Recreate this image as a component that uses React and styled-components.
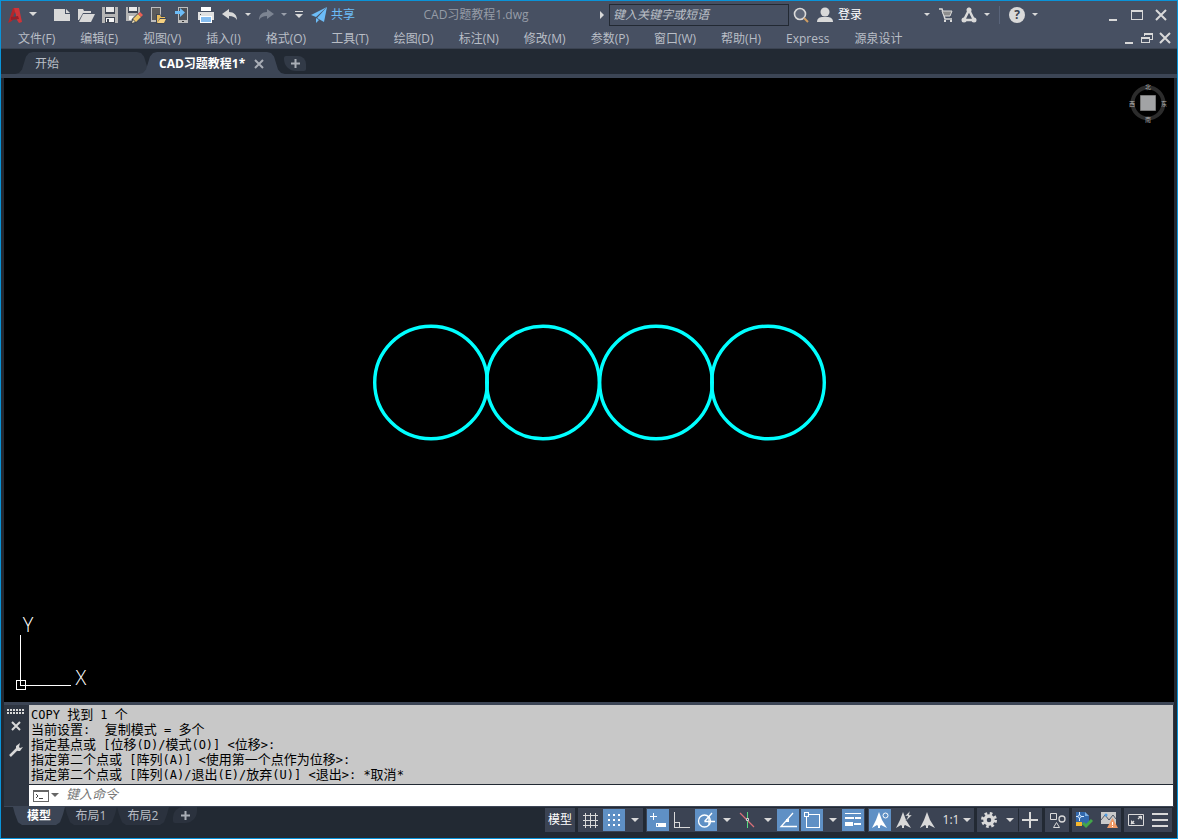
import React from "react";
import styled, { createGlobalStyle, css } from "styled-components";

const COLORS = {
  frame: "#0a93d8",
  chrome: "#475062",
  dark: "#222933",
  edge: "#2b323e",
  tab: "#323a47",
  tabActive: "#3c4555",
  cell: "#3b4353",
  active: "#5f90c5",
  icon: "#d9d9d9",
  text: "#b9bec6",
  blue: "#6cbcf7",
};

const MENUS = [
  "文件(F)",
  "编辑(E)",
  "视图(V)",
  "插入(I)",
  "格式(O)",
  "工具(T)",
  "绘图(D)",
  "标注(N)",
  "修改(M)",
  "参数(P)",
  "窗口(W)",
  "帮助(H)",
  "Express",
  "源泉设计",
];

const HISTORY = [
  "COPY 找到 1 个",
  "当前设置:  复制模式 = 多个",
  "指定基点或 [位移(D)/模式(O)] <位移>:",
  "指定第二个点或 [阵列(A)] <使用第一个点作为位移>:",
  "指定第二个点或 [阵列(A)/退出(E)/放弃(U)] <退出>: *取消*",
];

const CIRCLES = [58, 170, 283, 395];

const Svg = ({ w = 18, h = 18, children, ...rest }) => (
  <svg
    width={w}
    height={h}
    viewBox={`0 0 ${w} ${h}`}
    fill="none"
    stroke={COLORS.icon}
    aria-hidden="true"
    {...rest}
  >
    {children}
  </svg>
);

const Caret = ({ color = COLORS.icon, small }) => (
  <Svg w={8} h={5} stroke="none" fill={color}>
    <path d={small ? "M1 1h6L4 4z" : "M0 0h8L4 4z"} />
  </Svg>
);

/* ---------- title bar icons ---------- */

const LogoIcon = () => (
  <Svg stroke="none">
    <path d="M2 17L7 2h5L6 15z" fill="#b3262b" />
    <path d="M8 2h5l3 14-3 1-2-3-2-8z" fill="#cf3438" />
    <path d="M5 11l7-1 1 3-8 1z" fill="#96202a" />
    <path d="M9 6l1 4-3 1z" fill={COLORS.chrome} />
  </Svg>
);

const NewIcon = () => (
  <Svg stroke="none" fill={COLORS.icon}>
    <path d="M1 3h11v5h5v7H1zM13 3l4 4h-4z" />
  </Svg>
);

const OpenIcon = () => (
  <Svg stroke="none" fill={COLORS.icon}>
    <path d="M1 3h5l1 2h7v2H6l-4 7H1z" />
    <path d="M6 8h12l-4 8H2z" />
  </Svg>
);

const SaveIcon = () => (
  <Svg stroke="none">
    <path d="M1 1h16v16H1z" fill="#b5b5b5" />
    <path d="M4 1h10v7H4z" fill="#3f4654" />
    <path d="M5 1h8v5H5z" fill="#e8e8e8" />
    <path d="M4 11h10v6H4z" fill="#3f4654" />
    <path d="M5 12h8v4H5z" fill="#f4f4f4" />
    <path d="M6 13h2v3H6z" fill="#3f4654" />
  </Svg>
);

const SaveAsIcon = () => (
  <Svg stroke="none">
    <path d="M1 1h14v5l-8 9H1z" fill="#b5b5b5" />
    <path d="M3 1h10v6H3z" fill="#3f4654" />
    <path d="M4 1h8v4H4z" fill="#e8e8e8" />
    <path d="M4 10h5l-3 4H4z" fill="#f4f4f4" />
    <path d="M7 13l6-6 4 4-6 6-5 1z" fill="#3f4654" />
    <path d="M8 13l5-5 3 3-5 5z" fill="#f0c76a" />
    <path d="M13 8l2-2 3 3-2 2z" fill="#ec5f55" />
    <path d="M8 14l2 2-3 1z" fill="#f6e3b5" />
  </Svg>
);

const WebOpenIcon = () => (
  <Svg stroke="none">
    <path d="M2 1h10v15H2z" fill="#bdbdbd" />
    <path d="M3 2h8v12H3z" fill="#5b5b5b" />
    <path d="M7 8h4l1 2h4v2h2l-3 6H7z" fill="#3f4654" />
    <path d="M8 9h3l1 2h4v1h-5l-3 5z" fill="#e9bd5c" />
    <path d="M11 13h6l-2 4H8z" fill="#f5d080" />
  </Svg>
);

const MobileIcon = () => (
  <Svg stroke="none">
    <path d="M5 1h10v16H5z" fill="#bdbdbd" />
    <path d="M6 2h8v12H6z" fill="#4d5056" />
    <path d="M9 15h2v1H9z" fill="#333" />
    <path d="M2 5h5V2l5 4.500L7 11V8H2z" fill={COLORS.blue} />
  </Svg>
);

const PrintIcon = () => (
  <Svg stroke="none">
    <path d="M4 1h10v4H4z" fill="#fff" />
    <path d="M1 6h16v8H1z" fill="#e1e1e1" />
    <path d="M3 8h1v1H3z" fill="#555" />
    <path d="M3 10h12v7H3z" fill="#fff" />
    <path d="M4 11h10v5H4z" fill="#85bdf0" />
  </Svg>
);

const UndoIcon = ({ color = COLORS.icon, flip }) => (
  <Svg stroke="none" fill={color}>
    <path
      d="M1 8l7-5v3c5 0 8 3 8 8-2-3-4-4-8-4v3z"
      transform={flip ? "matrix(-1 0 0 1 18 0)" : undefined}
    />
  </Svg>
);

const PlaneIcon = () => (
  <Svg stroke="none" fill={COLORS.blue}>
    <path d="M1 9l16-8L6 11z" />
    <path d="M17 1L7 12l7 4z" />
    <path d="M6 12l3 2-3 3z" />
  </Svg>
);

const SearchIcon = () => (
  <Svg>
    <circle cx="8" cy="8" r="5.500" strokeWidth="1.600" fill="#5d6678" />
    <path d="M12 12l4 4" stroke="#cf9d62" strokeWidth="2" />
  </Svg>
);

const UserIcon = () => (
  <Svg stroke="none" fill={COLORS.icon}>
    <circle cx="9" cy="6" r="4.500" />
    <path d="M1 16c0-4 3-5 6-5h4c3 0 6 1 6 5z" />
  </Svg>
);

const CartIcon = () => (
  <Svg>
    <path d="M3 3h3l3 10h7" strokeWidth="1.500" />
    <path d="M6 5h10l-2 5H8z" fill="#8d8d8d" />
    <path d="M8 14h2v2H8zM14 14h2v2h-2z" fill={COLORS.icon} stroke="none" />
  </Svg>
);

const AppsIcon = () => (
  <Svg>
    <path d="M9 4L4 14h10z" strokeWidth="2.500" />
    <g fill={COLORS.icon} stroke="none">
      <circle cx="9" cy="4" r="2.500" />
      <circle cx="4" cy="14" r="2.500" />
      <circle cx="14" cy="14" r="2.500" />
    </g>
  </Svg>
);

/* ---------- status bar icons ---------- */

const GridIcon = () => (
  <Svg shapeRendering="crispEdges">
    <path d="M4.500 2v15M9.500 2v15M14.500 2v15M2 4.500h15M2 9.500h15M2 14.500h15" />
  </Svg>
);

const SnapIcon = () => (
  <Svg stroke="none" fill="#fff">
    {[3, 8, 13].map((y) =>
      [3, 8, 13].map((x) => (
        <rect key={`${x}-${y}`} x={x} y={y} width="2" height="2" />
      ))
    )}
  </Svg>
);

const DynIcon = () => (
  <Svg stroke="#fff" shapeRendering="crispEdges">
    <path d="M4.500 2v7M1 5.500h7" />
    <path d="M7 12h10v4H7z" fill="#fff" stroke="none" />
    <path d="M8 13h1v2H8z" fill={COLORS.active} stroke="none" />
  </Svg>
);

const OrthoIcon = () => (
  <Svg shapeRendering="crispEdges">
    <path d="M1.500 1v15.500H17M1.500 11.500h5v5" />
  </Svg>
);

const PolarIcon = () => (
  <Svg stroke="#fff">
    <circle cx="7.500" cy="10" r="6" strokeWidth="1.300" />
    <path d="M7.500 10.500H18M7.500 10.500L15 2M12 6v8" strokeWidth="1.300" />
  </Svg>
);

const IsoIcon = () => (
  <Svg>
    <path d="M2 2l14 14" stroke="#d87078" strokeWidth="1.200" />
    <path d="M9.500 1v16" stroke="#57d880" shapeRendering="crispEdges" />
    <path d="M8.500 7.500h2v2h-2z" fill={COLORS.cell} />
  </Svg>
);

const TrackIcon = () => (
  <Svg stroke="#fff">
    <path d="M14 2L2 15.500h16" strokeWidth="1.300" />
    <path d="M7 8h3v3H7z" fill="#fff" stroke="none" />
  </Svg>
);

const OsnapIcon = () => (
  <Svg stroke="#fff" shapeRendering="crispEdges">
    <path d="M3.500 3.500h13v13h-13z" />
    <path d="M1.500 1.500h4v4h-4z" fill={COLORS.active} />
  </Svg>
);

const WeightIcon = () => (
  <Svg stroke="none" fill="#fff">
    <path d="M1 2h16v1H1zM1 6h9v2H1zM11 6h6v2h-6zM1 11h8v4H1zM10 12h7v2h-7z" />
  </Svg>
);

const ScaleMark = ({ color = COLORS.icon, badge }) => (
  <Svg stroke="none" fill={color}>
    <path d="M8 1l3 8 5 8-6-3-1 1v2H7v-2l-1-1-5 3 4-8z" />
    {badge === "ring" && (
      <circle cx="14.500" cy="4.500" r="2.500" fill={COLORS.active} stroke={color} />
    )}
    {badge === "bolt" && (
      <path d="M15 0l-5 5h3l-2 5 6-6h-3z" stroke={COLORS.cell} strokeWidth="0.400" />
    )}
  </Svg>
);

const GearIcon = () => (
  <Svg>
    <circle cx="9" cy="9" r="6.500" strokeWidth="3" strokeDasharray="2.600 2.500" />
    <circle cx="9" cy="9" r="4" strokeWidth="3.500" />
  </Svg>
);

const PlusIcon = () => (
  <Svg>
    <path d="M9 1v16M1 9h16" strokeWidth="2" />
  </Svg>
);

const IsolateIcon = () => (
  <Svg>
    <path d="M2.500 2.500h6v6h-6zM8.500 11.500l3 5h-6z" />
    <circle cx="14" cy="8" r="3" strokeWidth="1.300" />
  </Svg>
);

const HardwareIcon = () => (
  <Svg stroke="none">
    <path d="M1 1h9l4 4v9H1z" fill="#3369ad" />
    <path d="M10 1l4 4h-4z" fill="#7fb2e6" />
    <path d="M4.500 1v9M1 5.500h8" stroke="#d5eaff" />
    <circle cx="4.500" cy="5.500" r="1.500" fill="#3369ad" stroke="#d5eaff" />
    <path d="M1 11h6v4H1z" fill="#f5b72c" />
    <path d="M8 12l3 3 6-6" stroke="#43a64a" strokeWidth="3" />
  </Svg>
);

const MonitorIcon = () => (
  <Svg stroke="none">
    <path d="M1 1h15v12H1z" fill="#c9c9c9" />
    <path d="M1 9l4-5 4 5 4-5 3 4" stroke="#515866" />
    <circle cx="6" cy="4" r="1.500" fill="#4f9be0" />
    <path d="M12.500 7l5.500 10H7z" fill="#f09a66" />
    <path d="M12 11h1v3h-1zM12 15h1v1h-1z" fill="#fff" />
  </Svg>
);

const CleanIcon = () => (
  <Svg>
    <path d="M1.500 3.500h15v11h-15z" />
    <path d="M11 8l3-3M7 10l-3 3" strokeWidth="1.300" />
    <path d="M11 5h4v4zM4 9v4h4z" fill={COLORS.icon} stroke="none" />
  </Svg>
);

const BarsIcon = () => (
  <Svg>
    <path d="M1 3h16M1 9h16M1 15h16" strokeWidth="2" />
  </Svg>
);

const MinimizeIcon = () => (
  <Svg w={14} h={14}>
    <path d="M3 12h8" strokeWidth="2" />
  </Svg>
);

const CloseIcon = ({ w = 14, color = COLORS.icon, stroke = 2 }) => (
  <Svg w={w} h={w} stroke={color}>
    <path d={`M2 2l${w - 4} ${w - 4}M${w - 2} 2L2 ${w - 2}`} strokeWidth={stroke} />
  </Svg>
);

const ConsoleText = ({ children }) =>
  children
    .split(/([\u4e00-\u9fff]+)/)
    .map((run, index) =>
      index % 2 ? <Han key={index}>{run}</Han> : run
    );

const TitleBar = () => (
  <TitleRow>
    <ToolGroup>
      <ToolButton aria-label="AutoCAD">
        <LogoIcon />
      </ToolButton>
      <CaretButton aria-label="应用程序菜单">
        <Caret />
      </CaretButton>
    </ToolGroup>
    <ToolGroup $gap={11}>
      <ToolButton aria-label="新建">
        <NewIcon />
      </ToolButton>
      <ToolButton aria-label="打开">
        <OpenIcon />
      </ToolButton>
      <ToolButton aria-label="保存">
        <SaveIcon />
      </ToolButton>
      <ToolButton aria-label="另存为">
        <SaveAsIcon />
      </ToolButton>
      <ToolButton aria-label="从 Web 打开">
        <WebOpenIcon />
      </ToolButton>
      <ToolButton aria-label="保存到移动设备">
        <MobileIcon />
      </ToolButton>
      <ToolButton aria-label="打印">
        <PrintIcon />
      </ToolButton>
      <ToolButton aria-label="放弃">
        <UndoIcon />
      </ToolButton>
      <CaretButton aria-label="放弃列表">
        <Caret small />
      </CaretButton>
      <ToolButton aria-label="重做">
        <UndoIcon color="#7c8492" flip />
      </ToolButton>
      <CaretButton aria-label="重做列表">
        <Caret small color="#9aa0ab" />
      </CaretButton>
      <CaretButton $wide aria-label="自定义快速访问工具栏">
        <Svg w={8} h={7} stroke="none" fill={COLORS.icon}>
          <path d="M0 0h8v1H0zM0 3h8L4 7z" />
        </Svg>
      </CaretButton>
      <ShareButton>
        <PlaneIcon />
        共享
      </ShareButton>
    </ToolGroup>
    <DocumentName>CAD习题教程1.dwg</DocumentName>
    <ToolGroup>
      <CaretButton aria-label="展开搜索">
        <Svg w={5} h={8} stroke="none" fill={COLORS.icon}>
          <path d="M0 0l4 4-4 4z" />
        </Svg>
      </CaretButton>
      <SearchBox type="text" aria-label="搜索" placeholder="键入关键字或短语" />
      <ToolButton aria-label="搜索">
        <SearchIcon />
      </ToolButton>
      <LoginButton>
        <UserIcon />
        登录
      </LoginButton>
    </ToolGroup>
    <ToolGroup $gap={59}>
      <CaretButton aria-label="登录选项">
        <Caret small />
      </CaretButton>
      <ToolButton aria-label="应用商店">
        <CartIcon />
      </ToolButton>
      <ToolButton aria-label="应用">
        <AppsIcon />
      </ToolButton>
      <CaretButton aria-label="应用选项">
        <Caret small />
      </CaretButton>
      <Divider />
      <ToolButton aria-label="帮助">
        <HelpDisc>?</HelpDisc>
      </ToolButton>
      <CaretButton aria-label="帮助选项">
        <Caret small />
      </CaretButton>
    </ToolGroup>
    <ToolGroup $gap={60}>
      <ToolButton aria-label="最小化">
        <MinimizeIcon />
      </ToolButton>
      <ToolButton aria-label="最大化">
        <Svg w={14} h={14} shapeRendering="crispEdges">
          <path d="M1.500 2.500h11v9h-11zM1 3.500h11" />
        </Svg>
      </ToolButton>
      <ToolButton aria-label="关闭">
        <CloseIcon />
      </ToolButton>
    </ToolGroup>
  </TitleRow>
);

const MenuBar = () => (
  <MenuRow>
    <MenuList>
      {MENUS.map((menu) => (
        <MenuButton key={menu}>{menu}</MenuButton>
      ))}
    </MenuList>
    <ToolGroup>
      <MdiButton aria-label="最小化图形">
        <MinimizeIcon />
      </MdiButton>
      <MdiButton aria-label="还原图形">
        <Svg w={14} h={14} shapeRendering="crispEdges">
          <path d="M4.500 5V2.500h8v6H10M4 3.500h9M1.500 6.500h8v5h-8zM1 7.500h9" />
        </Svg>
      </MdiButton>
      <MdiButton aria-label="关闭图形">
        <CloseIcon />
      </MdiButton>
    </ToolGroup>
  </MenuRow>
);

const Drawing = () => (
  <Canvas>
    <Svg w={454} h={118} stroke="#00ffff">
      {CIRCLES.map((x) => (
        <circle key={x} cx={x} cy="58.500" r="56.300" strokeWidth="3.400" />
      ))}
    </Svg>
    <Ucs>
      <Svg w={84} h={92} stroke="#fff">
        <g shapeRendering="crispEdges">
          <path d="M6.500 33v51M6 83.500h51M2.500 78.500h9v9h-9z" />
        </g>
        <AxisText x="14" y="30">
          Y
        </AxisText>
        <AxisText x="67" y="83">
          X
        </AxisText>
      </Svg>
    </Ucs>
    <ViewCube aria-label="ViewCube">
      <Svg w={40} h={40}>
        <circle cx="20" cy="20" r="15.500" stroke="#2c2c2c" strokeWidth="4" />
        <path d="M12.500 12.500h15v15h-15z" fill="#a2a3a5" stroke="#777" />
        <CompassText x="20" y="6">
          北
        </CompassText>
        <CompassText x="20" y="39">
          南
        </CompassText>
        <CompassText x="4" y="23">
          西
        </CompassText>
        <CompassText x="36" y="23">
          东
        </CompassText>
      </Svg>
    </ViewCube>
  </Canvas>
);

const CommandLine = () => (
  <CommandPanel>
    <CommandTools>
      <Grip />
      <SideButton aria-label="关闭命令行">
        <CloseIcon w={12} />
      </SideButton>
      <SideButton aria-label="自定义">
        <Svg w={16} h={16}>
          <path d="M2 14l7-7" strokeWidth="2.500" />
          <path
            d="M12 1L8 4v4l2 1h2l3-4-3 1-1-1z"
            fill={COLORS.icon}
            stroke="none"
          />
        </Svg>
      </SideButton>
    </CommandTools>
    <CommandBody>
      <History>
        {HISTORY.map((line) => (
          <HistoryLine key={line}>
            <ConsoleText>{line}</ConsoleText>
          </HistoryLine>
        ))}
      </History>
      <Prompt>
        <PromptButton aria-label="最近使用的命令">
          <Svg w={16} h={12} stroke="#666" shapeRendering="crispEdges">
            <path d="M0.500 0.500h15v11H0.500zM0 1.500h16" />
            <path d="M3 4l2 2-2 2M6 8.500h4" stroke="#444" />
          </Svg>
          <Caret color="#666" />
        </PromptButton>
        <PromptInput type="text" aria-label="命令" placeholder="键入命令" />
      </Prompt>
    </CommandBody>
  </CommandPanel>
);

const StatusBar = () => (
  <StatusRow>
    <LayoutTabs>
      <LayoutTab $active>模型</LayoutTab>
      <LayoutTab>布局1</LayoutTab>
      <LayoutTab>布局2</LayoutTab>
      <LayoutTab $add aria-label="新建布局">
        <Svg w={9} h={9} stroke="#a9aeb6">
          <path d="M4.500 0v9M0 4.500h9" strokeWidth="2" />
        </Svg>
      </LayoutTab>
    </LayoutTabs>
    <StatusGroups>
      <StatusGroup>
        <ModelButton>模型</ModelButton>
      </StatusGroup>
      <StatusGroup>
        <StatusButton aria-label="栅格">
          <GridIcon />
        </StatusButton>
        <StatusButton $active aria-label="捕捉">
          <SnapIcon />
        </StatusButton>
        <StatusCaret aria-label="捕捉设置">
          <Caret />
        </StatusCaret>
      </StatusGroup>
      <StatusGroup>
        <StatusButton $active aria-label="动态输入">
          <DynIcon />
        </StatusButton>
        <StatusButton aria-label="正交">
          <OrthoIcon />
        </StatusButton>
        <StatusButton $active aria-label="极轴追踪">
          <PolarIcon />
        </StatusButton>
        <StatusCaret aria-label="极轴设置">
          <Caret />
        </StatusCaret>
        <StatusButton aria-label="等轴测草图">
          <IsoIcon />
        </StatusButton>
        <StatusCaret aria-label="等轴测设置">
          <Caret />
        </StatusCaret>
        <StatusButton $active aria-label="对象捕捉追踪">
          <TrackIcon />
        </StatusButton>
        <StatusButton $active aria-label="对象捕捉">
          <OsnapIcon />
        </StatusButton>
        <StatusCaret aria-label="对象捕捉设置">
          <Caret />
        </StatusCaret>
        <StatusButton $active aria-label="线宽">
          <WeightIcon />
        </StatusButton>
      </StatusGroup>
      <StatusGroup>
        <StatusButton $active aria-label="注释可见性">
          <ScaleMark color="#fff" badge="ring" />
        </StatusButton>
        <StatusButton aria-label="自动缩放">
          <ScaleMark badge="bolt" />
        </StatusButton>
        <StatusButton aria-label="注释比例">
          <ScaleMark />
        </StatusButton>
        <ScaleButton>
          1:1
          <Caret />
        </ScaleButton>
      </StatusGroup>
      <StatusGroup>
        <StatusButton aria-label="切换工作空间">
          <GearIcon />
        </StatusButton>
        <StatusCaret aria-label="工作空间列表">
          <Caret />
        </StatusCaret>
        <StatusButton $divided aria-label="注释监视器">
          <PlusIcon />
        </StatusButton>
      </StatusGroup>
      <StatusGroup>
        <StatusButton aria-label="隔离对象">
          <IsolateIcon />
        </StatusButton>
      </StatusGroup>
      <StatusGroup $spaced>
        <StatusButton aria-label="硬件加速">
          <HardwareIcon />
        </StatusButton>
        <StatusButton aria-label="性能">
          <MonitorIcon />
        </StatusButton>
      </StatusGroup>
      <StatusGroup>
        <StatusButton aria-label="全屏显示">
          <CleanIcon />
        </StatusButton>
        <StatusButton aria-label="自定义">
          <BarsIcon />
        </StatusButton>
      </StatusGroup>
    </StatusGroups>
  </StatusRow>
);

const App = () => (
  <>
    <GlobalStyle />
    <Window>
      <TitleBar />
      <MenuBar />
      <FileTabs>
        <FileTab>开始</FileTab>
        <FileTab $active>
          CAD习题教程1*
          <CloseIcon w={12} color="#a9aeb6" />
        </FileTab>
        <AddTab aria-label="新图形">
          <Svg w={9} h={9} stroke="#a9aeb6">
            <path d="M4.500 0v9M0 4.500h9" strokeWidth="2" />
          </Svg>
        </AddTab>
      </FileTabs>
      <Drawing />
      <CommandLine />
      <StatusBar />
    </Window>
  </>
);

const GlobalStyle = createGlobalStyle`
  *, *::before, *::after {
    box-sizing: border-box;
  }

  body {
    margin: 0;
    background: ${COLORS.dark};
    color: ${COLORS.text};
    font: 12px/16px "Open Sans", "Noto Sans CJK SC", sans-serif;
  }

  button {
    display: flex;
    align-items: center;
    justify-content: center;
    flex: none;
    margin: 0;
    padding: 0;
    border: 0;
    background: none;
    color: inherit;
    font: inherit;
    white-space: nowrap;
  }

  input {
    margin: 0;
    font: inherit;
  }

  svg {
    display: block;
    flex: none;
  }
`;

const Window = styled.div`
  display: flex;
  flex-direction: column;
  min-height: 100vh;
  border: 1px solid ${COLORS.frame};
`;

const TitleRow = styled.header`
  display: flex;
  align-items: center;
  height: 27px;
  padding: 0 4px 0 2px;
  background: ${COLORS.chrome};
`;

const ToolGroup = styled.div`
  display: flex;
  align-items: center;
  flex: none;
  margin-left: ${(props) => props.$gap || 0}px;
`;

const ToolButton = styled.button`
  width: 24px;
  height: 24px;
`;

const CaretButton = styled.button`
  width: ${(props) => (props.$wide ? 18 : 12)}px;
  height: 24px;
`;

const ShareButton = styled.button`
  gap: 3px;
  margin-left: 2px;
  color: ${COLORS.blue};
`;

const DocumentName = styled.h1`
  flex: 1;
  margin: 0;
  color: #969ca7;
  font: inherit;
  text-align: center;
  white-space: nowrap;
`;

const SearchBox = styled.input`
  width: 180px;
  height: 22px;
  padding: 0 3px;
  border: 1px solid ${COLORS.dark};
  background: ${COLORS.chrome};
  color: #fff;

  &::placeholder {
    color: #bcc0c8;
    font-style: italic;
  }
`;

const LoginButton = styled.button`
  gap: 4px;
  margin-left: 3px;
  color: #fff;
`;

const Divider = styled.span`
  width: 1px;
  height: 18px;
  margin: 0 5px 0 6px;
  background: #59647a;
`;

const HelpDisc = styled.span`
  width: 16px;
  height: 16px;
  border-radius: 50%;
  background: ${COLORS.icon};
  color: #3a4250;
  font-weight: 700;
`;

const MenuRow = styled.nav`
  display: flex;
  align-items: flex-end;
  justify-content: space-between;
  height: 21px;
  padding: 0 3px 0 17px;
  border-bottom: 1px solid #3b4351;
  background: ${COLORS.chrome};
`;

const MenuList = styled.div`
  display: flex;
  gap: 25px;
`;

const MenuButton = styled.button`
  height: 18px;
`;

const MdiButton = styled.button`
  width: 18px;
  height: 20px;
`;

const FileTabs = styled.div`
  display: flex;
  align-items: flex-end;
  height: 29px;
  padding: 0 3px 0 14px;
  border-bottom: 4px solid ${COLORS.tabActive};
`;

const tabShape = css`
  clip-path: polygon(
    0 100%,
    4px 96%,
    7px 80%,
    11px 20%,
    14px 5%,
    18px 0,
    calc(100% - 18px) 0,
    calc(100% - 14px) 5%,
    calc(100% - 11px) 20%,
    calc(100% - 7px) 80%,
    calc(100% - 4px) 96%,
    100% 100%
  );
`;

const FileTab = styled.button`
  justify-content: flex-start;
  gap: 8px;
  width: 140px;
  height: 22px;
  padding: 2px 0 0 20px;
  background: ${COLORS.tab};
  ${tabShape}

  ${(props) =>
    props.$active &&
    css`
      margin-left: -16px;
      width: 146px;
      background: ${COLORS.tabActive};
      color: #fff;
      font-weight: 700;
    `}
`;

const AddTab = styled.button`
  width: 22px;
  height: 15px;
  margin: 0 0 3px -1px;
  border-radius: 2px 8px 2px 12px;
  background: ${COLORS.tab};
`;

const Canvas = styled.main`
  position: relative;
  display: flex;
  align-items: center;
  justify-content: center;
  flex: 1;
  min-height: 300px;
  padding: 0 0 14px 22px;
  margin: 0 3px;
  background: #000;
`;

const Ucs = styled.div`
  position: absolute;
  left: 10px;
  bottom: 8px;
`;

const AxisText = styled.text`
  fill: #fff;
  stroke: none;
  font: 300 20px "Open Sans", sans-serif;
  text-anchor: middle;
`;

const ViewCube = styled.button`
  position: absolute;
  top: 5px;
  right: 6px;
`;

const CompassText = styled.text`
  fill: #b5b5b5;
  stroke: none;
  font: 6px "Noto Sans CJK SC", sans-serif;
  text-anchor: middle;
`;

const CommandPanel = styled.section`
  display: flex;
  margin: 0 3px;
  padding-right: 1px;
  border-top: 3px solid ${COLORS.tabActive};
  border-bottom: 1px solid ${COLORS.tabActive};
  background: #2e3541;
`;

const CommandTools = styled.div`
  display: flex;
  flex-direction: column;
  align-items: center;
  width: 25px;
  padding: 4px 2px 0 0;
`;

const Grip = styled.div`
  width: 17px;
  height: 5px;
  background: repeating-linear-gradient(
      0deg,
      transparent 0 2px,
      #2e3541 2px 3px
    ),
    repeating-linear-gradient(90deg, ${COLORS.icon} 0 2px, transparent 2px 3px);
`;

const SideButton = styled.button`
  width: 20px;
  height: 24px;
`;

const CommandBody = styled.div`
  flex: 1;
  min-width: 0;
`;

const History = styled.div`
  padding: 2px;
  border-bottom: 1px solid ${COLORS.dark};
  background: #c8c8c8;
  color: #000;
`;

const HistoryLine = styled.p`
  height: 15px;
  margin: 0;
  font: 12px/15px "DejaVu Sans Mono", "Noto Sans CJK SC", monospace;
  white-space: pre;
`;

const Han = styled.span`
  font-size: 13px;
`;

const Prompt = styled.div`
  display: flex;
  align-items: center;
  height: 21px;
  padding-left: 4px;
  background: #fff;
`;

const PromptButton = styled.button`
  gap: 2px;
  height: 20px;
`;

const PromptInput = styled.input`
  flex: 1;
  height: 21px;
  padding: 0 7px 3px;
  border: 0;
  outline: 0;
  background: none;
  font-size: 13px;

  &::placeholder {
    color: #777;
    font-style: italic;
  }
`;

const StatusRow = styled.footer`
  display: flex;
  align-items: flex-start;
  justify-content: space-between;
  height: 31px;
  padding: 0 5px 0 12px;
`;

const LayoutTabs = styled.div`
  display: flex;
`;

const LayoutTab = styled.button`
  width: 52px;
  height: 18px;
  background: ${(props) => (props.$active ? COLORS.tabActive : "#2b323e")};
  color: ${(props) => (props.$active ? "#fff" : COLORS.text)};
  font-weight: ${(props) => (props.$active ? 700 : 400)};
  clip-path: polygon(
    0 0,
    100% 0,
    calc(100% - 2px) 40%,
    calc(100% - 5px) 85%,
    calc(100% - 9px) 100%,
    9px 100%,
    5px 85%,
    2px 40%
  );

  ${(props) =>
    props.$add &&
    css`
      width: 24px;
      margin-left: 4px;
      height: 16px;
      clip-path: none;
      border-radius: 10px 0 12px 2px;
    `}
`;

const StatusGroups = styled.div`
  display: flex;
  gap: 3px;
  padding-top: 1px;
`;

const StatusGroup = styled.div`
  display: flex;
  gap: ${(props) => (props.$spaced ? 1 : 0)}px;
  background: ${COLORS.cell};
`;

const StatusButton = styled.button`
  width: 24px;
  height: 24px;
  border: 1px solid ${COLORS.cell};
  background: ${(props) => (props.$active ? COLORS.active : COLORS.cell)};

  ${(props) =>
    props.$divided &&
    css`
      border-left-color: ${COLORS.dark};
    `}
`;

const StatusCaret = styled.button`
  width: 17px;
  height: 24px;
`;

const ModelButton = styled.button`
  width: 30px;
  height: 24px;
  color: #fff;
`;

const ScaleButton = styled.button`
  gap: 4px;
  width: 34px;
  height: 24px;
  color: #e6e6e6;
`;

export default App;
